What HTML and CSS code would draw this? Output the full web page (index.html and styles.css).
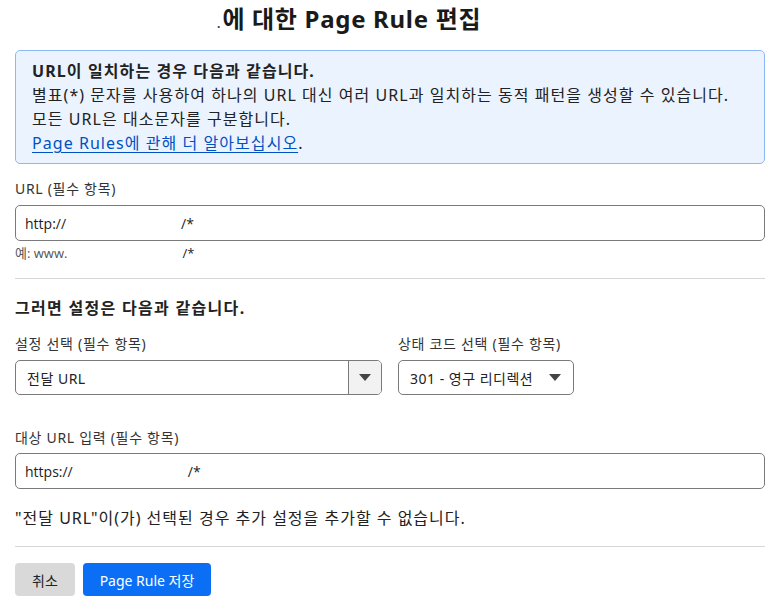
FILE: index.html
```html
<!DOCTYPE html>
<html lang="ko">
<head>
<meta charset="utf-8">
<title>Page Rule 편집</title>
<link rel="stylesheet" href="styles.css">
</head>
<body>
<main class="page">
  <h1 class="title"><span class="domain"></span><span class="dot">.</span>에 대한 Page Rule 편집</h1>

  <section class="info">
    <p class="info-strong">URL이 일치하는 경우 다음과 같습니다.</p>
    <p>별표(*) 문자를 사용하여 하나의 URL 대신 여러 URL과 일치하는 동적 패턴을 생성할 수 있습니다.</p>
    <p>모든 URL은 대소문자를 구분합니다.</p>
    <p><a class="link" href="#">Page Rules에 관해 더 알아보십시오</a>.</p>
  </section>

  <div class="field field-url">
    <label class="label">URL (필수 항목)</label>
    <div class="input"><span>http://</span><span class="masked"></span><span>/*</span></div>
    <div class="hint">예: www.<span class="masked-hint"></span><span class="hint-end">/*</span></div>
  </div>

  <hr class="rule rule-1">

  <h2 class="subtitle">그러면 설정은 다음과 같습니다.</h2>

  <div class="row">
    <div class="field field-setting">
      <label class="label">설정 선택 (필수 항목)</label>
      <div class="select select-wide">
        <span class="select-value">전달 URL</span>
        <span class="select-btn"><span class="caret"></span></span>
      </div>
    </div>
    <div class="field field-status">
      <label class="label">상태 코드 선택 (필수 항목)</label>
      <div class="select select-small">
        <span class="select-value">301 - 영구 리디렉션</span>
        <span class="caret"></span>
      </div>
    </div>
  </div>

  <div class="field field-target">
    <label class="label">대상 URL 입력 (필수 항목)</label>
    <div class="input input-target"><span>https://</span><span class="masked masked-2"></span><span>/*</span></div>
  </div>

  <p class="note">"전달 URL"이(가) 선택된 경우 추가 설정을 추가할 수 없습니다.</p>

  <hr class="rule rule-2">

  <div class="actions">
    <button class="btn btn-cancel">취소</button>
    <button class="btn btn-save">Page Rule 저장</button>
  </div>
</main>
</body>
</html>
```

FILE: styles.css
```css
* { box-sizing: border-box; }

html, body {
  margin: 0;
  padding: 0;
  background: #ffffff;
}

body {
  font-family: "Noto Sans", "Noto Sans CJK KR", sans-serif;
  color: #1f1f1f;
}

.page {
  display: flex;
  flex-direction: column;
  padding: 0 15px;
  width: 780px;
}

.title {
  margin: 4px 0 0 0;
  font-size: 24px;
  line-height: 30px;
  font-weight: 700;
  letter-spacing: 0.7px;
  color: #1a1a1a;
  display: flex;
  align-items: baseline;
}

.domain {
  display: inline-block;
  width: 202px;
}

.dot {
  font-size: 12px;
  color: #2b3a6b;
  letter-spacing: 0;
  margin-right: 2px;
}

.info {
  margin-top: 11px;
  border: 1px solid #8cb8f5;
  background: #ebf3fe;
  border-radius: 5px;
  padding: 8px 16px;
}

.info p {
  margin: 0;
  font-size: 16px;
  line-height: 24px;
  letter-spacing: 1.05px;
  color: #222;
}

.info .info-strong {
  font-weight: 700;
  letter-spacing: 1.1px;
}

.link {
  color: #0051c3;
  text-decoration: underline;
  text-underline-offset: 3px;
}

.field {
  display: flex;
  flex-direction: column;
}

.field-url { margin-top: 15px; }

.label {
  font-size: 14px;
  line-height: 20px;
  letter-spacing: 0.7px;
  color: #333;
}

.input {
  margin-top: 6px;
  height: 36px;
  border: 1px solid #7a7a7a;
  border-radius: 5px;
  display: flex;
  align-items: center;
  padding: 0 9px;
  font-size: 14px;
  color: #222;
  font-family: "Open Sans", "Noto Sans CJK KR", sans-serif;
}

.masked { display: inline-block; width: 115px; }
.masked-2 { width: 115px; }

.hint {
  margin-top: 3px;
  font-size: 13px;
  line-height: 18px;
  color: #555;
  font-family: "Open Sans", "Noto Sans CJK KR", sans-serif;
}

.masked-hint { display: inline-block; width: 115px; }
.hint-end { color: #222; }

.rule {
  border: 0;
  border-top: 1px solid #d6d6d6;
  margin: 0;
  width: 100%;
}

.rule-1 { margin-top: 16px; }

.subtitle {
  margin: 17px 0 0 0;
  font-size: 16px;
  line-height: 24px;
  font-weight: 700;
  letter-spacing: 1.3px;
  color: #222;
}

.row {
  margin-top: 14px;
  display: flex;
  gap: 16px;
}

.select {
  margin-top: 6px;
  height: 35px;
  border: 1px solid #7a7a7a;
  border-radius: 5px;
  display: flex;
  align-items: center;
  font-size: 14px;
  letter-spacing: 0.5px;
  color: #222;
}

.select-wide {
  width: 367px;
  overflow: hidden;
}

.select-wide .select-value {
  flex: 1;
  padding-left: 11px;
}

.select-btn {
  width: 33px;
  height: 100%;
  border-left: 1px solid #7a7a7a;
  background: #f2f2f2;
  display: flex;
  align-items: center;
  justify-content: center;
}

.select-small {
  width: 176px;
  padding: 0 12px 0 11px;
  justify-content: space-between;
}

.caret {
  width: 0;
  height: 0;
  border-left: 6px solid transparent;
  border-right: 6px solid transparent;
  border-top: 7px solid #444;
}

.field-target { margin-top: 33px; }

.input-target { margin-top: 5px; }

.note {
  margin: 17px 0 0 0;
  font-size: 16px;
  line-height: 24px;
  letter-spacing: 1px;
  color: #222;
}

.rule-2 { margin-top: 16px; }

.actions {
  margin-top: 16px;
  display: flex;
  gap: 8px;
}

.btn {
  height: 33px;
  border: 0;
  border-radius: 4px;
  font-family: "Noto Sans", "Noto Sans CJK KR", sans-serif;
  font-size: 14px;
  padding: 0;
}

.btn-cancel {
  background: #d9d9d9;
  color: #222;
  width: 60px;
}

.btn-save {
  background: #0b6ff5;
  color: #fff;
  width: 128px;
}
```
